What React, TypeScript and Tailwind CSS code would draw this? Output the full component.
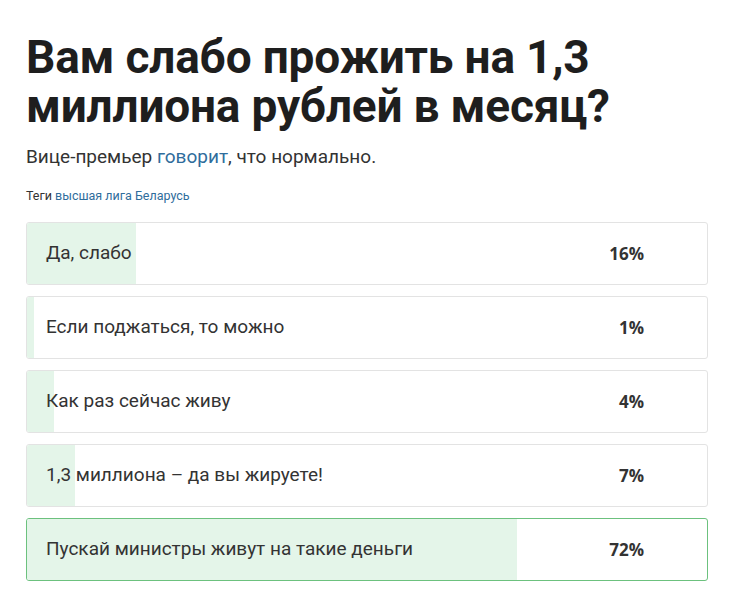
import React from 'react';

const options = [
  { label: 'Да, слабо', percent: 16 },
  { label: 'Если поджаться, то можно', percent: 1 },
  { label: 'Как раз сейчас живу', percent: 4 },
  { label: '1,3 миллиона – да вы жируете!', percent: 7 },
  { label: 'Пускай министры живут на такие деньги', percent: 72, chosen: true },
];

const App = () => {
  return (
    <div className="bg-white w-[732px] h-[598px] overflow-hidden font-['Roboto',sans-serif] text-[#222]">
      <div className="pl-[26px] pr-[24px] pt-[33px]">
        <h1 className="text-[46px] leading-[49px] font-bold tracking-[-0.2px] text-[#1e1e1e]">
          Вам слабо прожить на 1,3
          <br />
          миллиона рублей в месяц?
        </h1>
        <p className="mt-[14px] text-[19px] leading-[24px] text-[#333]">
          Вице-премьер <span className="text-[#2f6d9c]">говорит</span>, что нормально.
        </p>
        <p className="mt-[19px] text-[12.5px] leading-[16px] text-[#333]">
          Теги <span className="text-[#2f6d9c]">высшая лига Беларусь</span>
        </p>

        <div className="mt-[18px] flex flex-col gap-[11px]">
          {options.map(opt => (
            <div
              key={opt.label}
              className={
                opt.chosen
                  ? 'relative h-[63px] rounded-[3px] border border-[#6cc17e] overflow-hidden'
                  : 'relative h-[63px] rounded-[3px] border border-[#e3e3e3] overflow-hidden'
              }
            >
              <div
                className="absolute left-0 top-0 bottom-0 bg-[#e4f5e9]"
                style={{ width: `${opt.percent}%` }}
              />
              <div className="relative h-full flex items-center justify-between pl-[19px] pr-[63px]">
                <span className="text-[19px] text-[#333]">{opt.label}</span>
                <span className="font-['Open_Sans',sans-serif] font-bold text-[17px] text-[#333]">
                  {opt.percent}%
                </span>
              </div>
            </div>
          ))}
        </div>
      </div>
    </div>
  );
};

export default App;
